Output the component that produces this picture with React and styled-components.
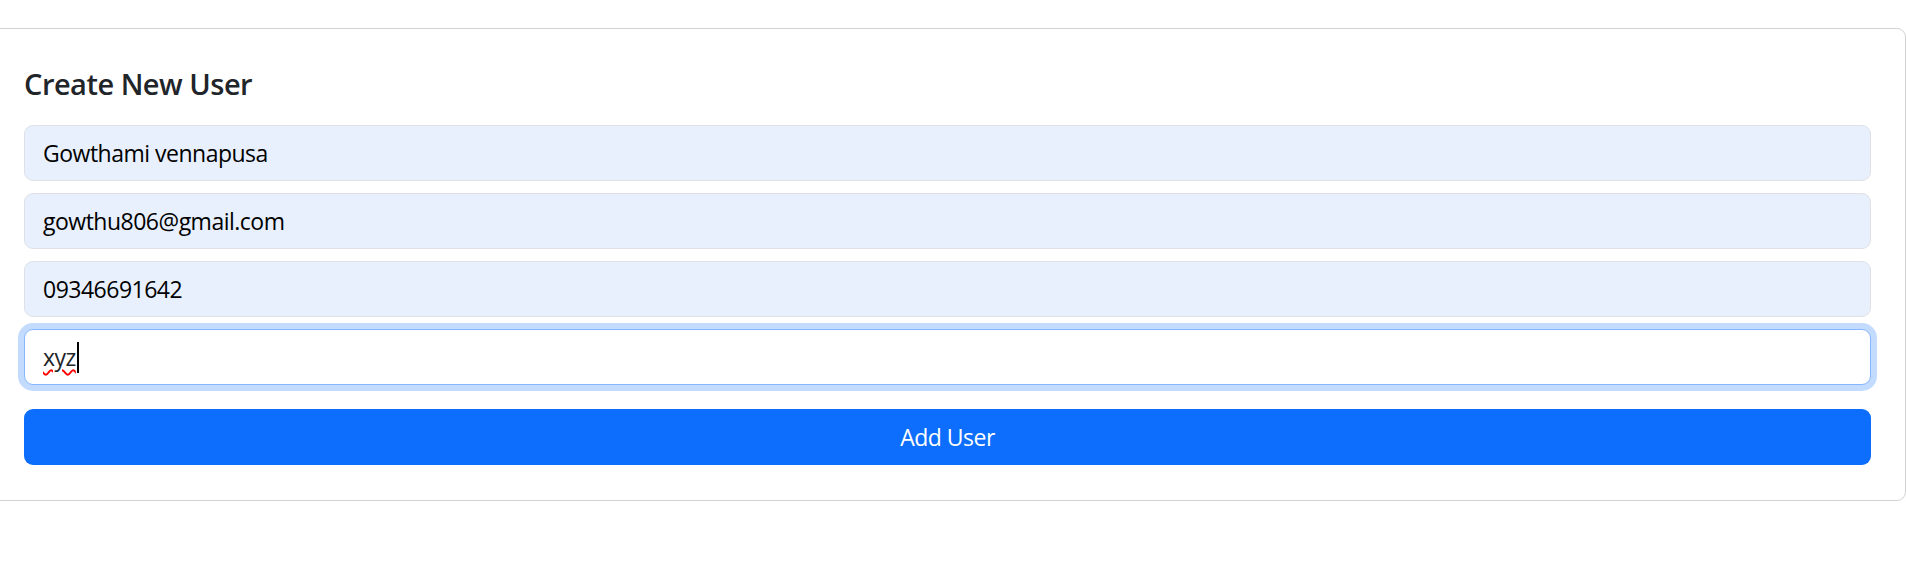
import React from 'react'
import styled, { createGlobalStyle } from 'styled-components';

const GlobalStyle = createGlobalStyle`
body {
  margin: 0;
  background: #ffffff;
  font-family: "Segoe UI", "Open Sans", "Noto Sans", sans-serif;
  color: #212529;
  overflow: hidden;
}
`;

const Card = styled.div`
margin-top: 28px;
margin-left: -11px;
width: 1917px;
box-sizing: border-box;
border: 1px solid rgba(0, 0, 0, 0.175);
border-radius: 9px;
padding: 37px 34px 35px;
`;

const Title = styled.h5`
margin: 0 0 23px;
font-size: 29px;
font-weight: 600;
letter-spacing: -0.5px;
line-height: 36px;
color: #212529;
`;

const Form = styled.div`
display: flex;
flex-direction: column;
gap: 12px;
`;

const Field = styled.div`
height: 56px;
box-sizing: border-box;
display: flex;
align-items: center;
padding: 0 18px;
font-size: 23px;
letter-spacing: -0.5px;
border-radius: 9px;
border: 1px solid ${p => (p.$focused ? '#86b7fe' : '#dee2e6')};
background: ${p => (p.$autofill ? '#e8f0fe' : '#ffffff')};
box-shadow: ${p => (p.$focused ? '0 0 0 6px rgba(13, 110, 253, 0.25)' : 'none')};
color: ${p => (p.$autofill ? '#000000' : '#212529')};
`;

const Misspelt = styled.span`
text-decoration: underline wavy #ff0000;
text-decoration-thickness: 2px;
text-underline-offset: 3px;
`;

const Caret = styled.span`
display: inline-block;
width: 2px;
height: 31px;
background: #000000;
margin-left: 1px;
`;

const Button = styled.button`
margin-top: 12px;
height: 56px;
border: none;
border-radius: 9px;
background: #0d6efd;
color: #ffffff;
font-family: inherit;
font-size: 23px;
letter-spacing: -0.5px;
cursor: pointer;
`;

const App = () => {
  const filled = ['Gowthami vennapusa', 'gowthu806@gmail.com', '09346691642'];

  return (
    <>
      <GlobalStyle />
      <Card>
        <Title>Create New User</Title>
        <Form>
          {filled.map((value) => (
            <Field key={value} $autofill>{value}</Field>
          ))}
          <Field $focused>
            <Misspelt>xyz</Misspelt>
            <Caret />
          </Field>
          <Button>Add User</Button>
        </Form>
      </Card>
    </>
  )
};

export default App
